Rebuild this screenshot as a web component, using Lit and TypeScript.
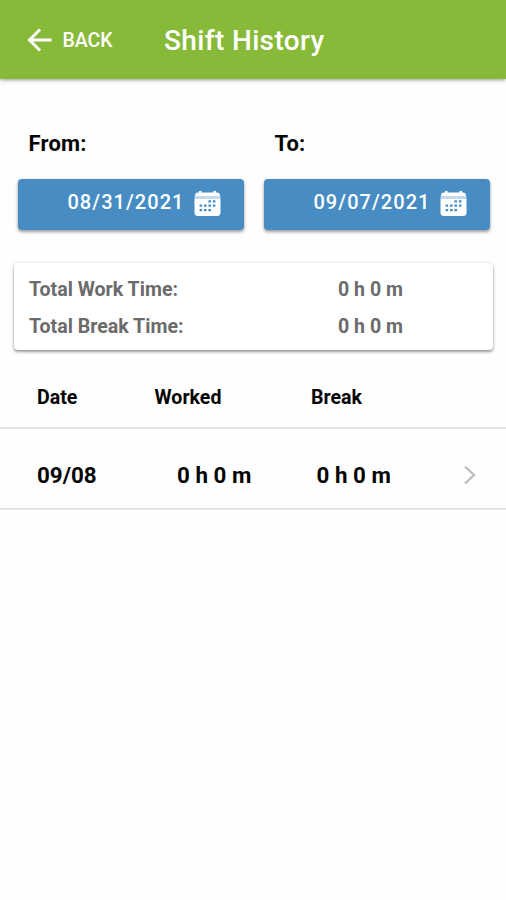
import { LitElement, html, css } from "lit";
import { customElement, property } from "lit/decorators.js";

@customElement("date-field")
class DateField extends LitElement {
  @property() label = "";
  @property() value = "";

  static styles = css`
    :host { display: block; }
    .label {
      height: 30px;
      line-height: 30px;
      padding-top: 1px;
      margin: 0 0 20px 11px;
      font-size: 22px;
      font-weight: 700;
      letter-spacing: 0.2px;
      color: #050505;
    }
    button {
      display: flex;
      align-items: flex-start;
      justify-content: flex-end;
      box-sizing: border-box;
      width: 100%;
      height: 51px;
      padding: 8px 23px 0 0;
      border: 0;
      border-radius: 4px;
      background: #478dc3;
      color: #fff;
      font: 500 20px/30px Roboto, sans-serif;
      letter-spacing: 1.05px;
      box-shadow: 0 2px 3px rgba(0, 0, 0, 0.32), 0 1px 5px rgba(0, 0, 0, 0.12);
    }
    svg { margin: 3px 0 0 9px; }
  `;

  render() {
    return html`
      <div class="label">${this.label}</div>
      <button>
        <span>${this.value}</span>
        <svg width="27" height="27" viewBox="0 0 27 27">
          <path fill="#fff" d="M1 6V5.500Q1 2.500 4 2.500H5V1H7.500V2.500H19.500V1H22V2.500H23Q26 2.500 26 5.500V6Z" />
          <path fill="#c3daec" d="M.5 6H26.500V8.500H.5Z" />
          <path fill="#fff" d="M.5 8.500H26.500V22.500Q26.500 26 23 26H4Q.5 26 .5 22.500Z" />
          <path
            stroke="#478dc3"
            stroke-width="2.300"
            stroke-dasharray="2.600 1.800"
            fill="none"
            d="M14.400 11.400H22M5.600 15.700H22M5.600 20.200H17"
          />
        </svg>
      </button>
    `;
  }
}

@customElement("app-root")
class AppRoot extends LitElement {
  private totals = [
    { label: "Total Work Time:", value: "0 h 0 m" },
    { label: "Total Break Time:", value: "0 h 0 m" },
  ];
  private shifts = [{ date: "09/08", worked: "0 h 0 m", rest: "0 h 0 m" }];

  static styles = css`
    :host {
      display: block;
      min-height: 900px;
      background: #fefefe;
      font-family: Roboto, sans-serif;
    }
    header {
      display: flex;
      align-items: center;
      height: 79px;
      padding-left: 27px;
      background: #87ba38;
      color: #fff;
      box-shadow: 0 1px 4px rgba(0, 0, 0, 0.4);
    }
    .back {
      display: flex;
      align-items: center;
      gap: 10.500px;
      width: 137px;
      font-size: 19.5px;
      font-weight: 500;
      line-height: 30px;
    }
    .back span { padding-top: 2px; }
    .title {
      margin: 0;
      padding-top: 2px;
      font-size: 28px;
      font-weight: 500;
      line-height: 36px;
      letter-spacing: 0.35px;
    }
    .range {
      display: grid;
      grid-template-columns: 226px 226px;
      gap: 20px;
      padding: 49px 0 0 17.500px;
    }
    .totals {
      box-sizing: border-box;
      margin: 33px 13px 0 14px;
      height: 87px;
      padding: 8px 0 0 15px;
      border-radius: 4px;
      background: #fff;
      box-shadow: 0 2px 3px rgba(0, 0, 0, 0.38), 0 0 3px rgba(0, 0, 0, 0.12);
      color: #6b6b6b;
      font-size: 19.6px;
      font-weight: 700;
    }
    .total {
      display: grid;
      grid-template-columns: 309px 1fr;
      height: 37px;
      line-height: 37px;
    }
    .head {
      display: grid;
      grid-template-columns: 117.500px 156.500px 1fr;
      box-sizing: border-box;
      height: 79px;
      padding: 17px 0 0 37px;
      border-bottom: 2px solid #e2e2e2;
      color: #050505;
      font-size: 19.6px;
      font-weight: 700;
      line-height: 62px;
    }
    .row {
      display: grid;
      grid-template-columns: 140px 139.500px 146.500px auto;
      align-items: center;
      justify-content: start;
      box-sizing: border-box;
      height: 81px;
      padding: 13px 0 0 37px;
      border-bottom: 2px solid #e2e2e2;
      color: #050505;
      font-size: 22.400px;
      font-weight: 700;
    }
  `;

  render() {
    return html`
      <header>
        <div class="back">
          <svg width="25" height="24" viewBox="0 0 25 24" fill="none" stroke="#fff" stroke-width="3">
            <path d="M24.500 12H3M13 1.500L2.500 12L13 22.500" />
          </svg>
          <span>BACK</span>
        </div>
        <h1 class="title">Shift History</h1>
      </header>
      <section class="range">
        <date-field label="From:" value="08/31/2021"></date-field>
        <date-field label="To:" value="09/07/2021"></date-field>
      </section>
      <section class="totals">
        ${this.totals.map((t) => html`<div class="total"><span>${t.label}</span><span>${t.value}</span></div>`)}
      </section>
      <div class="head"><span>Date</span><span>Worked</span><span>Break</span></div>
      ${this.shifts.map(
        (s) => html`
          <div class="row">
            <span>${s.date}</span><span>${s.worked}</span><span>${s.rest}</span>
            <svg width="14" height="20" viewBox="0 0 14 20" fill="none" stroke="#bdbdbd" stroke-width="2.400">
              <path d="M2 1.500L11 10L2 18.500" />
            </svg>
          </div>
        `
      )}
    `;
  }
}
